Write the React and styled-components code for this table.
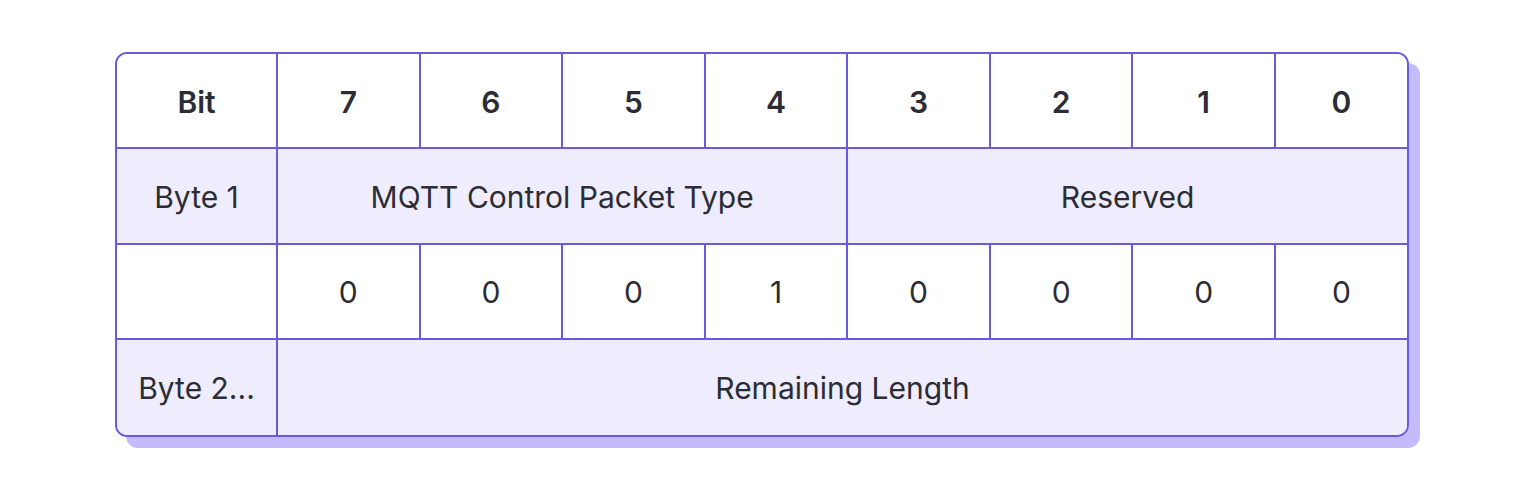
import React from 'react';
import styled, { createGlobalStyle } from 'styled-components';

const GlobalStyle = createGlobalStyle`
  body {
    margin: 0;
    background: #fff;
    font-family: Inter, "Noto Sans", sans-serif;
  }
`;

const Page = styled.div`
  width: 1536px;
  height: 500px;
  padding: 52px 0 0 115px;
  box-sizing: border-box;
`;

const Table = styled.div`
  display: grid;
  grid-template-columns: 161px repeat(7, 1fr) 131px;
  grid-auto-rows: 95.25px;
  width: 1294px;
  box-sizing: border-box;
  border: 2px solid #6a5add;
  border-radius: 12px;
  overflow: hidden;
  box-shadow: 11px 11px 0 #c3bbfb;
`;

const Cell = styled.div`
  display: flex;
  align-items: center;
  justify-content: center;
  padding-top: 2px;
  grid-column: span ${props => props.span || 1};
  background: ${props => (props.tint ? '#eeecfd' : '#fff')};
  border-right: ${props => (props.last ? 'none' : '2px solid #6a5add')};
  border-bottom: ${props => (props.bottom ? 'none' : '2px solid #6a5add')};
  font-size: 30px;
  font-weight: ${props => (props.bold ? 600 : 400)};
  color: #2c2c35;
`;

const bits = ['7', '6', '5', '4', '3', '2', '1', '0'];
const values = ['0', '0', '0', '1', '0', '0', '0', '0'];

export default function App() {
  return (
    <>
      <GlobalStyle />
      <Page>
        <Table>
          <Cell bold>Bit</Cell>
          {bits.map((b, i) => (
            <Cell key={b} bold last={i === 7}>
              {b}
            </Cell>
          ))}

          <Cell tint>Byte 1</Cell>
          <Cell tint span={4}>MQTT Control Packet Type</Cell>
          <Cell tint span={4} last>
            Reserved
          </Cell>

          <Cell />
          {values.map((v, i) => (
            <Cell key={i} last={i === 7}>
              {v}
            </Cell>
          ))}

          <Cell tint bottom>
            Byte 2...
          </Cell>
          <Cell tint span={8} last bottom>
            Remaining Length
          </Cell>
        </Table>
      </Page>
    </>
  );
}
